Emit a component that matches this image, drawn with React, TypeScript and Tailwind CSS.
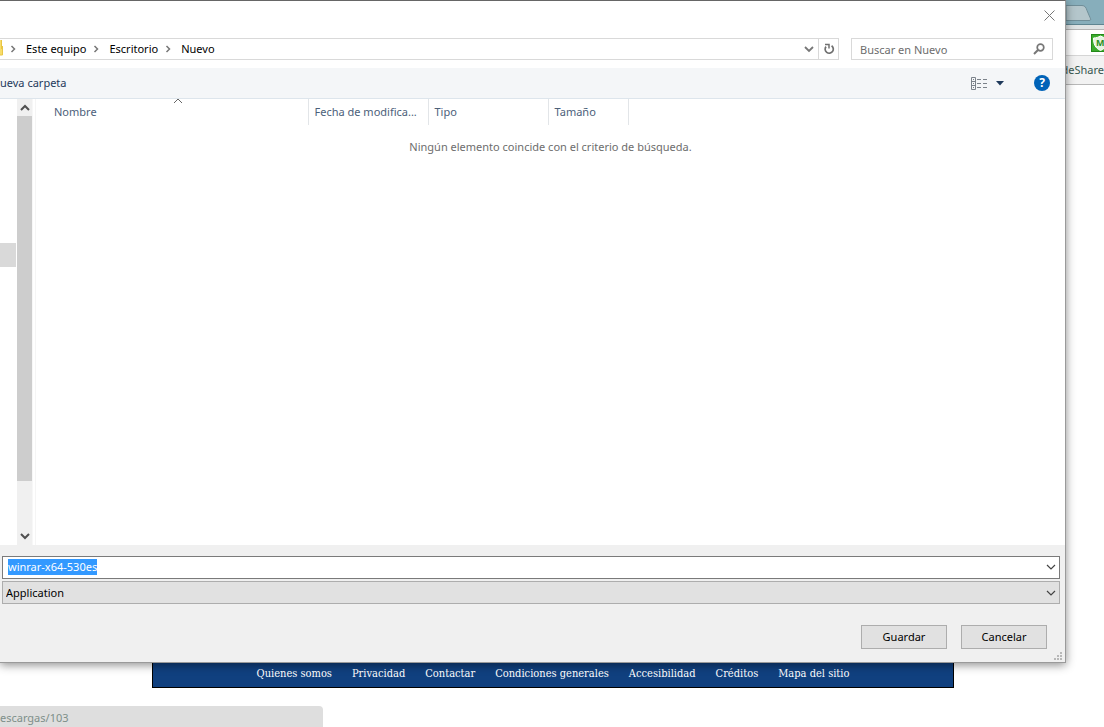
import { useEffect, useRef } from "react";

const crumbs = ["Este equipo", "Escritorio", "Nuevo"];

const footerLinks = [
  "Quienes somos",
  "Privacidad",
  "Contactar",
  "Condiciones generales",
  "Accesibilidad",
  "Créditos",
  "Mapa del sitio",
];

function Chevron({ className, d, width = 1.5 }: { className: string; d: string; width?: number }) {
  return (
    <svg viewBox="0 0 10 10" className={className} fill="none" stroke="currentColor" strokeWidth={width} aria-hidden="true">
      <path d={d} />
    </svg>
  );
}

const DOWN = "M1 3l4 4 4-4";
const UP = "M1 7l4-4 4 4";
const RIGHT = "M3.5 2l3 3-3 3";

function AddressRow() {
  return (
    <div className="flex h-[22px] shrink-0 gap-3 pr-3">
      <div className="flex flex-1 border border-l-0 border-[#d9d9d9]">
        <svg viewBox="0 0 3 20" className="h-5 w-[3px] shrink-0" aria-hidden="true">
          <path d="M0 1h2v15H0z" fill="#f8dc6a" />
          <path d="M2.500 7v9H0M1.500 1v9" fill="none" stroke="#e8c645" />
        </svg>
        <nav className="flex flex-1 items-center">
          {crumbs.map((c) => (
            <span key={c} className="flex items-center">
              <Chevron className="ml-[5px] mr-2 size-2.5 text-[#777]" d={RIGHT} />
              <a href="#" className="leading-5">{c}</a>
            </span>
          ))}
        </nav>
        <button aria-label="Ubicaciones anteriores" className="flex w-[18px] items-center justify-center text-[#777]">
          <Chevron className="size-2.5" d={DOWN} width={1.8} />
        </button>
        <button aria-label="Actualizar" className="flex w-5 items-center justify-center border-l border-[#d9d9d9] text-[#707070]">
          <svg viewBox="0 0 12 12" className="size-3" fill="none" stroke="currentColor" strokeWidth="1.7" aria-hidden="true">
            <path d="M8.6 2.8A4.1 4.1 0 1 1 3 3.6" />
            <path d="M2 1.5h4v4" strokeWidth="1.5" />
          </svg>
        </button>
      </div>
      <div className="flex w-[202px] items-center border border-[#d9d9d9] pl-2 pr-1.5">
        <input
          type="text"
          aria-label="Buscar en Nuevo"
          placeholder="Buscar en Nuevo"
          className="h-[18px] min-w-0 flex-1 outline-none placeholder:text-[#6d6d6d]"
        />
        <svg viewBox="0 0 14 14" className="size-3.5 text-[#777]" fill="none" stroke="currentColor" aria-hidden="true">
          <circle cx="8.5" cy="5.5" r="3.3" strokeWidth="1.7" />
          <path d="M6.2 7.8L2 12" strokeWidth="2" />
        </svg>
      </div>
    </div>
  );
}

function Toolbar() {
  return (
    <div className="mt-2 flex h-[31px] shrink-0 items-center border-b border-[#dde5ec] bg-[#f4f6f8] pr-[15px]">
      <button className="text-[#1e395b]">ueva carpeta</button>
      <button aria-label="Cambiar la vista" className="ml-auto flex items-center gap-2">
        <svg viewBox="0 0 17 13" className="h-[13px] w-[17px]" fill="none" stroke="#7b828a" aria-hidden="true">
          <path d="M.5 .5h4v12h-4zM.5 4.5h4M.5 8.5h4" />
          <path d="M2 2.5h1M2 6.5h1M2 10.5h1" />
          <path d="M6 2.5h4M12 2.5h4M6 6.5h4M12 6.5h4M6 10.5h4M12 10.5h4" />
        </svg>
        <svg viewBox="0 0 8 5" className="h-[5px] w-2" aria-hidden="true">
          <path d="M0 0h8L4 4.5z" fill="#1e395b" />
        </svg>
      </button>
      <button
        aria-label="Ayuda"
        className="ml-[30px] size-4 rounded-full bg-[#0063b8] text-center text-xs leading-4 font-bold text-white"
      >
        ?
      </button>
    </div>
  );
}

function Files() {
  return (
    <div className="flex min-h-0 flex-1">
      <div className="w-4 shrink-0 pt-36">
        <div className="h-6 bg-[#d9d9d9]" />
      </div>
      <div className="ml-px flex w-4 shrink-0 flex-col items-center border-r border-[#f7f7f7] bg-[#f0f0f0] text-[#505050]">
        <Chevron className="mt-1 mb-[3px] size-2.5" d={UP} width={2} />
        <div className="w-full flex-1 bg-[#cdcdcd]" />
        <Chevron className="mt-[50px] mb-1 size-2.5" d={DOWN} width={2} />
      </div>
      <div className="ml-0.5 flex-1 border-l border-[#f5f5f5]">
        <table className="w-full table-fixed text-left">
          <thead className="text-[#4c607a]">
            <tr className="h-[26px]">
              <th className="w-[272px] border-r border-[#e2e5e8] pl-[18px] font-normal">
                <div className="relative">
                  Nombre
                  <Chevron className="absolute -top-2 left-[119px] size-2.5 text-[#666]" d={UP} width={1} />
                </div>
              </th>
              <th className="w-[120px] truncate border-r border-[#e2e5e8] px-1.5 font-normal">Fecha de modifica...</th>
              <th className="w-[120px] border-r border-[#e2e5e8] px-1.5 font-normal">Tipo</th>
              <th className="w-20 border-r border-[#e2e5e8] px-1.5 font-normal">Tamaño</th>
              <th aria-hidden="true" />
            </tr>
          </thead>
          <tbody>
            <tr>
              <td colSpan={5} className="h-11 text-center text-[#6d6d6d]">
                Ningún elemento coincide con el criterio de búsqueda.
              </td>
            </tr>
          </tbody>
        </table>
      </div>
    </div>
  );
}

function SaveForm() {
  const nameRef = useRef<HTMLInputElement>(null);

  useEffect(() => {
    nameRef.current?.focus();
    nameRef.current?.select();
  }, []);

  return (
    <form className="relative shrink-0 bg-[#f0f0f0] pt-[11px] pr-[5px] pb-[13px] pl-0.5" onSubmit={(e) => e.preventDefault()}>
      <div className="flex h-[23px] items-center border border-[#7a7a7a] bg-white pr-[3px] pb-px pl-[5px]">
        <input
          ref={nameRef}
          type="text"
          aria-label="Nombre"
          defaultValue="winrar-x64-530es"
          className="h-4 min-w-0 flex-1 leading-4 outline-none selection:bg-[#3399ff] selection:text-white"
        />
        <Chevron className="size-2.5 text-[#444]" d={DOWN} width={1.2} />
      </div>
      <div className="relative mt-0.5">
        <select
          aria-label="Tipo"
          className="block h-[23px] w-full appearance-none border border-[#adadad] bg-[#e1e1e1] pl-[3px] leading-5"
        >
          <option>Application</option>
        </select>
        <Chevron className="pointer-events-none absolute top-[7px] right-1 size-2.5 text-[#444]" d={DOWN} width={1.2} />
      </div>
      <div className="mt-[21px] flex justify-end gap-3.5 pr-[13px]">
        <button className="h-6 w-[86px] border border-[#adadad] bg-[#e1e1e1]">Guardar</button>
        <button type="button" className="h-6 w-[86px] border border-[#adadad] bg-[#e1e1e1]">Cancelar</button>
      </div>
      <svg viewBox="0 0 8 8" className="absolute right-[3px] bottom-0.5 size-2" fill="#b8b8b8" aria-hidden="true">
        <path d="M6 0h2v2H6zM3 3h2v2H3zM6 3h2v2H6zM0 6h2v2H0zM3 6h2v2H3zM6 6h2v2H6z" />
      </svg>
    </form>
  );
}

// Visible edge of the browser window behind the dialog
function BrowserEdge() {
  return (
    <aside className="w-[38px] shrink-0">
      <div className="h-[25px] border-b border-[#5f8591] bg-[#87aebb]">
        <svg viewBox="0 0 38 24" className="h-6 w-full" aria-hidden="true">
          <path d="M0 5.5h16c3 0 4 2 5 5l3 7c1 2 1 3-1 3H0z" fill="#b4c6cb" stroke="#708e98" />
        </svg>
      </div>
      <div className="h-1 bg-[#dfe3e4]" />
      <div className="flex h-[27px] items-center justify-end border-t border-b border-[#b5b5b5] border-b-[#d5d5d5] bg-white">
        <svg viewBox="0 0 13 18" className="h-[18px] w-[13px]" aria-hidden="true">
          <rect x=".5" y=".5" width="18" height="17" fill="#3bab2c" stroke="#23891a" />
          <path d="M2.500 4c3 0 5-1 7-2 2 1 4 2 7 2 0 6-1 10-7 12.500C4 14 2.500 10 2.500 4z" fill="#e4f3e0" stroke="#fff" />
          <text x="5" y="12" fontSize="9" fontWeight="bold" fill="#2b8f22">M</text>
        </svg>
      </div>
      <div className="flex h-[29px] justify-end border-b border-[#b8b8b8] bg-[#f2f2f2] leading-7 text-[#38574f]">
        <a href="#">deShare</a>
      </div>
    </aside>
  );
}

export default function App() {
  return (
    <div className="flex h-screen min-h-[400px] flex-col overflow-hidden bg-white font-['Noto_Sans','Open_Sans',sans-serif] text-[11px] text-black">
      <div className="flex min-h-0 flex-1">
        <main
          role="dialog"
          aria-label="Guardar como"
          className="relative z-10 flex min-w-0 flex-1 flex-col border-t border-r border-b border-[#9a9a9a] border-t-[#666] bg-white shadow-[0_2px_9px_rgba(0,0,0,0.45)]"
        >
          <div className="flex h-[37px] shrink-0 items-start justify-end pt-[9px] pr-2.5">
            <button aria-label="Cerrar" className="text-[#777]">
              <svg viewBox="0 0 11 11" className="size-[11px]" fill="none" stroke="currentColor" aria-hidden="true">
                <path d="M.5 .5l10 10M10.500 .5l-10 10" />
              </svg>
            </button>
          </div>
          <AddressRow />
          <Toolbar />
          <Files />
          <SaveForm />
        </main>
        <BrowserEdge />
      </div>
      <div className="shrink-0 pl-0.5">
        <footer className="mx-auto flex h-[25px] w-full max-w-[802px] items-center justify-center gap-5 border border-t-0 border-black bg-[#10407f] pb-0.5 font-['DejaVu_Serif_Condensed','DejaVu_Serif',serif] text-[11px] text-white">
          {footerLinks.map((l) => (
            <a key={l} href="#" className="whitespace-nowrap">{l}</a>
          ))}
        </footer>
      </div>
      <div className="mt-[18px] h-[21px] w-[323px] shrink-0 rounded-tr bg-[#dedede] leading-6 text-[#7d8f89]">escargas/103</div>
    </div>
  );
}
